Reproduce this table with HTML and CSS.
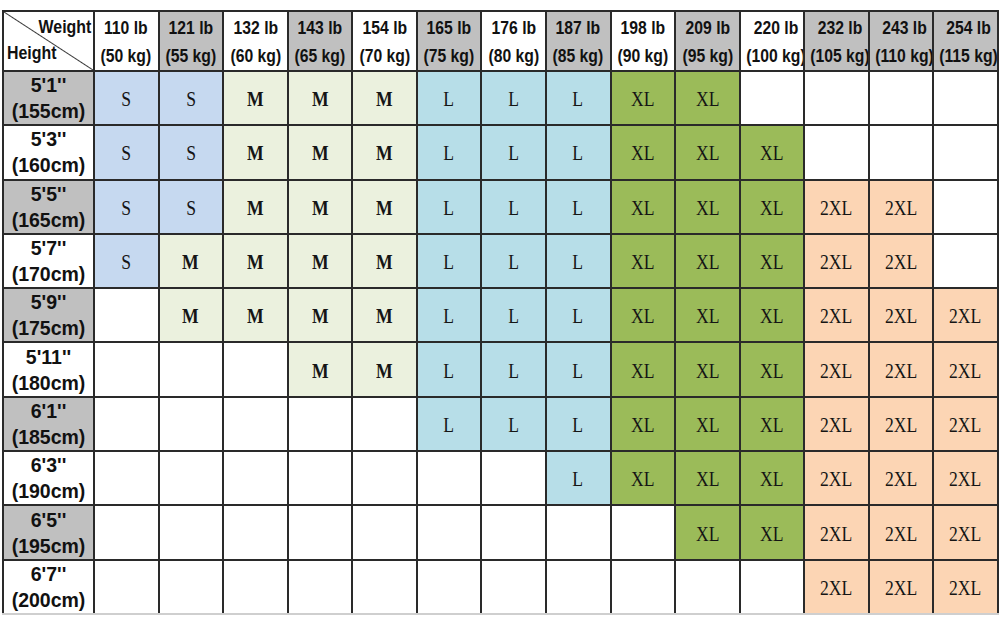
FILE: index.html
```html
<!DOCTYPE html>
<html>
<head>
<meta charset="utf-8">
<link rel="stylesheet" href="styles.css">
</head>
<body>
<table class="chart">
<colgroup><col class="c-h"><col span="14"></colgroup>
<thead>
<tr class="head">
<th class="corner"><div class="corner-in"><span class="w">Weight</span><span class="h">Height</span></div></th>
<th><span class="hx">110 lb<br>(50 kg)</span></th>
<th class="g"><span class="hx">121 lb<br>(55 kg)</span></th>
<th><span class="hx">132 lb<br>(60 kg)</span></th>
<th class="g"><span class="hx">143 lb<br>(65 kg)</span></th>
<th><span class="hx">154 lb<br>(70 kg)</span></th>
<th class="g"><span class="hx">165 lb<br>(75 kg)</span></th>
<th><span class="hx">176 lb<br>(80 kg)</span></th>
<th class="g"><span class="hx">187 lb<br>(85 kg)</span></th>
<th><span class="hx">198 lb<br>(90 kg)</span></th>
<th class="g"><span class="hx">209 lb<br>(95 kg)</span></th>
<th><span class="hx">220 lb<br>(100 kg)</span></th>
<th class="g"><span class="hx">232 lb<br>(105 kg)</span></th>
<th class="g"><span class="hx">243 lb<br>(110 kg)</span></th>
<th class="g"><span class="hx">254 lb<br>(115 kg)</span></th>
</tr>
</thead>
<tbody>
<tr>
<th class="g">5'1''<br>(155cm)</th>
<td class="s"><span class="z">S</span></td><td class="s"><span class="z">S</span></td>
<td class="m"><span class="z">M</span></td><td class="m"><span class="z">M</span></td><td class="m"><span class="z">M</span></td>
<td class="l"><span class="z">L</span></td><td class="l"><span class="z">L</span></td><td class="l"><span class="z">L</span></td>
<td class="xl"><span class="z">XL</span></td><td class="xl"><span class="z">XL</span></td>
<td></td><td></td><td></td><td></td>
</tr>
<tr>
<th>5'3''<br>(160cm)</th>
<td class="s"><span class="z">S</span></td><td class="s"><span class="z">S</span></td>
<td class="m"><span class="z">M</span></td><td class="m"><span class="z">M</span></td><td class="m"><span class="z">M</span></td>
<td class="l"><span class="z">L</span></td><td class="l"><span class="z">L</span></td><td class="l"><span class="z">L</span></td>
<td class="xl"><span class="z">XL</span></td><td class="xl"><span class="z">XL</span></td><td class="xl"><span class="z">XL</span></td>
<td></td><td></td><td></td>
</tr>
<tr>
<th class="g">5'5''<br>(165cm)</th>
<td class="s"><span class="z">S</span></td><td class="s"><span class="z">S</span></td>
<td class="m"><span class="z">M</span></td><td class="m"><span class="z">M</span></td><td class="m"><span class="z">M</span></td>
<td class="l"><span class="z">L</span></td><td class="l"><span class="z">L</span></td><td class="l"><span class="z">L</span></td>
<td class="xl"><span class="z">XL</span></td><td class="xl"><span class="z">XL</span></td><td class="xl"><span class="z">XL</span></td>
<td class="x2"><span class="z">2XL</span></td><td class="x2"><span class="z">2XL</span></td>
<td></td>
</tr>
<tr>
<th>5'7''<br>(170cm)</th>
<td class="s"><span class="z">S</span></td>
<td class="m"><span class="z">M</span></td><td class="m"><span class="z">M</span></td><td class="m"><span class="z">M</span></td><td class="m"><span class="z">M</span></td>
<td class="l"><span class="z">L</span></td><td class="l"><span class="z">L</span></td><td class="l"><span class="z">L</span></td>
<td class="xl"><span class="z">XL</span></td><td class="xl"><span class="z">XL</span></td><td class="xl"><span class="z">XL</span></td>
<td class="x2"><span class="z">2XL</span></td><td class="x2"><span class="z">2XL</span></td>
<td></td>
</tr>
<tr>
<th class="g">5'9''<br>(175cm)</th>
<td></td>
<td class="m"><span class="z">M</span></td><td class="m"><span class="z">M</span></td><td class="m"><span class="z">M</span></td><td class="m"><span class="z">M</span></td>
<td class="l"><span class="z">L</span></td><td class="l"><span class="z">L</span></td><td class="l"><span class="z">L</span></td>
<td class="xl"><span class="z">XL</span></td><td class="xl"><span class="z">XL</span></td><td class="xl"><span class="z">XL</span></td>
<td class="x2"><span class="z">2XL</span></td><td class="x2"><span class="z">2XL</span></td><td class="x2"><span class="z">2XL</span></td>
</tr>
<tr>
<th>5'11''<br>(180cm)</th>
<td></td><td></td><td></td>
<td class="m"><span class="z">M</span></td><td class="m"><span class="z">M</span></td>
<td class="l"><span class="z">L</span></td><td class="l"><span class="z">L</span></td><td class="l"><span class="z">L</span></td>
<td class="xl"><span class="z">XL</span></td><td class="xl"><span class="z">XL</span></td><td class="xl"><span class="z">XL</span></td>
<td class="x2"><span class="z">2XL</span></td><td class="x2"><span class="z">2XL</span></td><td class="x2"><span class="z">2XL</span></td>
</tr>
<tr>
<th class="g">6'1''<br>(185cm)</th>
<td></td><td></td><td></td><td></td><td></td>
<td class="l"><span class="z">L</span></td><td class="l"><span class="z">L</span></td><td class="l"><span class="z">L</span></td>
<td class="xl"><span class="z">XL</span></td><td class="xl"><span class="z">XL</span></td><td class="xl"><span class="z">XL</span></td>
<td class="x2"><span class="z">2XL</span></td><td class="x2"><span class="z">2XL</span></td><td class="x2"><span class="z">2XL</span></td>
</tr>
<tr>
<th>6'3''<br>(190cm)</th>
<td></td><td></td><td></td><td></td><td></td><td></td><td></td>
<td class="l"><span class="z">L</span></td>
<td class="xl"><span class="z">XL</span></td><td class="xl"><span class="z">XL</span></td><td class="xl"><span class="z">XL</span></td>
<td class="x2"><span class="z">2XL</span></td><td class="x2"><span class="z">2XL</span></td><td class="x2"><span class="z">2XL</span></td>
</tr>
<tr>
<th class="g">6'5''<br>(195cm)</th>
<td></td><td></td><td></td><td></td><td></td><td></td><td></td><td></td><td></td>
<td class="xl"><span class="z">XL</span></td><td class="xl"><span class="z">XL</span></td>
<td class="x2"><span class="z">2XL</span></td><td class="x2"><span class="z">2XL</span></td><td class="x2"><span class="z">2XL</span></td>
</tr>
<tr class="last">
<th>6'7''<br>(200cm)</th>
<td></td><td></td><td></td><td></td><td></td><td></td><td></td><td></td><td></td><td></td><td></td>
<td class="x2"><span class="z">2XL</span></td><td class="x2"><span class="z">2XL</span></td><td class="x2"><span class="z">2XL</span></td>
</tr>
</tbody>
</table>
</body>
</html>
```

FILE: styles.css
```css
html, body {
  margin: 0;
  padding: 0;
  background: #ffffff;
}

.chart {
  margin: 10px 0 0 2px;
  width: 997px;
  table-layout: fixed;
  border-collapse: collapse;
  font-family: "Liberation Sans", Arial, sans-serif;
  color: #111;
}

.c-h {
  width: 91px;
}

.chart th,
.chart td {
  border: 2px solid #2a2a2a;
  padding: 0;
  text-align: center;
  vertical-align: middle;
  overflow: hidden;
  white-space: nowrap;
}

.head {
  height: 58px;
}

.head th {
  font-weight: bold;
  font-size: 18.5px;
  line-height: 28px;
}

.hx {
  display: inline-block;
  padding-top: 2px;
  transform: scaleX(0.85);
}

tbody tr {
  height: 54.3px;
}

tbody th {
  font-weight: bold;
  font-size: 19.5px;
  line-height: 26px;
  background: #ffffff;
}

.chart .g {
  background: #c0c0c0;
}

.corner {
  background: linear-gradient(to top right, transparent calc(50% - 1px), #3a3a3a 50%, transparent calc(50% + 1px));
}

.corner-in {
  display: flex;
  flex-direction: column;
  height: 58px;
  padding: 2px 2px 0 3px;
  box-sizing: border-box;
  line-height: 26px;
}

.corner-in .w {
  align-self: flex-end;
  transform: scaleX(0.86);
  transform-origin: right center;
}

.corner-in .h {
  align-self: flex-start;
  transform: scaleX(0.86);
  transform-origin: left center;
}

.z {
  display: inline-block;
  padding-top: 2px;
  font-family: "Liberation Serif", "Times New Roman", serif;
  font-size: 22px;
  color: #151515;
  transform: scaleX(0.8);
}

.s { background: #c6d9f0; }
.m { background: #ebf1de; }
.l { background: #b7dee8; }
.xl { background: #9bbb59; }
.x2 { background: #fcd5b4; }

.m .z {
  font-weight: bold;
}

.last th,
.last td {
  border-bottom-color: #cfcfcf;
}
```
